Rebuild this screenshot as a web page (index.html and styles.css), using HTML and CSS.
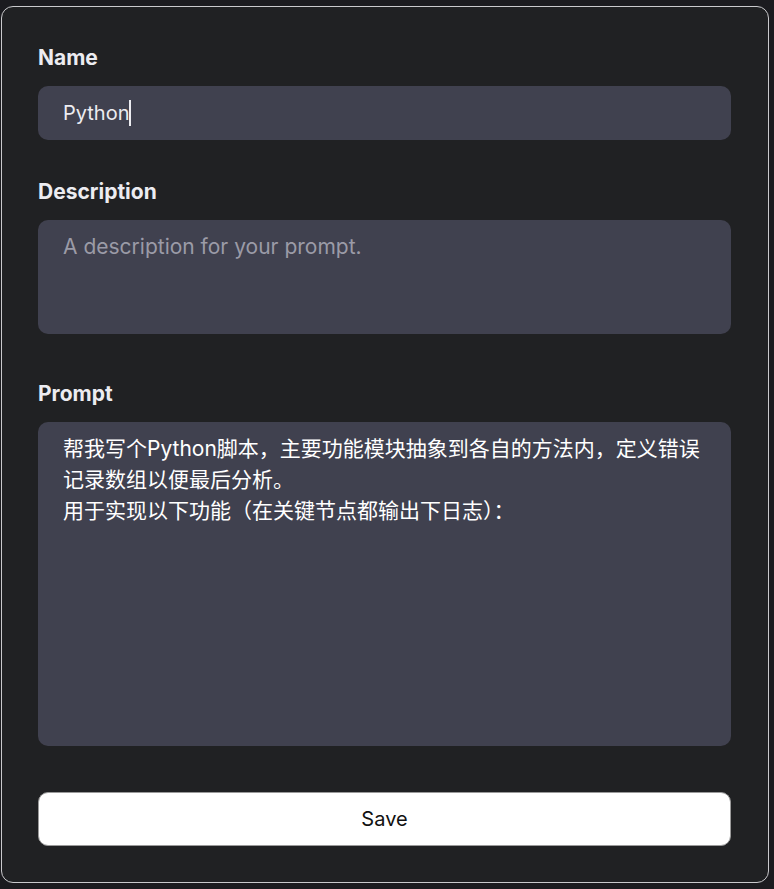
FILE: index.html
```html
<!DOCTYPE html>
<html lang="zh-CN">
<head>
<meta charset="utf-8">
<title>Edit prompt</title>
<link rel="stylesheet" href="styles.css">
</head>
<body>
<div class="dialog">
  <form class="form">
    <div class="group group-name">
      <label class="label">Name</label>
      <div class="field field-input">Python<span class="caret"></span></div>
    </div>
    <div class="group group-desc">
      <label class="label">Description</label>
      <div class="field field-desc placeholder">A description for your prompt.</div>
    </div>
    <div class="group group-prompt">
      <label class="label">Prompt</label>
      <div class="field field-prompt cjk">帮我写个Python脚本，主要功能模块抽象到各自的方法内，定义错误<br>记录数组以便最后分析。<br>用于实现以下功能（在关键节点都输出下日志）：</div>
    </div>
    <button type="button" class="save">Save</button>
  </form>
</div>
</body>
</html>
```
FILE: styles.css
```css
html, body {
  margin: 0;
  padding: 0;
}
body {
  background: #1b1b1f;
  width: 774px;
  height: 889px;
  overflow: hidden;
  font-family: Inter, "Noto Sans", sans-serif;
}
.dialog {
  box-sizing: border-box;
  margin: 6px 0 0 1px;
  width: 768px;
  height: 877px;
  background: #202123;
  border: 1px solid #c9c9cc;
  border-radius: 12px;
  padding: 38px 37px 35px 36px;
}
.form {
  display: flex;
  flex-direction: column;
}
.group {
  display: flex;
  flex-direction: column;
  gap: 15px;
}
.group-name { margin-bottom: 39px; }
.group-desc { margin-bottom: 47px; }
.group-prompt { margin-bottom: 46px; }
.label {
  font-size: 21px;
  line-height: 26px;
  font-weight: 700;
  color: #ececf1;
}
.field {
  box-sizing: border-box;
  background: #40414f;
  border-radius: 10px;
  color: #ececf1;
  font-size: 21px;
  line-height: 28px;
  padding: 13px 24px 12px 25px;
}
.field-input {
  height: 54px;
  display: flex;
  align-items: center;
  padding-top: 0;
  padding-bottom: 0;
  font-size: 20px;
}
.caret {
  display: inline-block;
  width: 2px;
  height: 26px;
  background: #ececf1;
}
.field-desc {
  height: 114px;
}
.placeholder {
  color: #9b9ba7;
}
.field-prompt {
  height: 324px;
  padding-top: 11px;
  line-height: 31px;
  white-space: nowrap;
}
.cjk {
  font-family: Inter, "Noto Sans CJK SC", sans-serif;
  color: #ffffff;
}
.save {
  box-sizing: border-box;
  height: 54px;
  width: 100%;
  background: #ffffff;
  border: 1px solid #9a9a9a;
  border-radius: 10px;
  font-family: Inter, sans-serif;
  font-size: 20px;
  color: #111111;
  cursor: pointer;
}
```
